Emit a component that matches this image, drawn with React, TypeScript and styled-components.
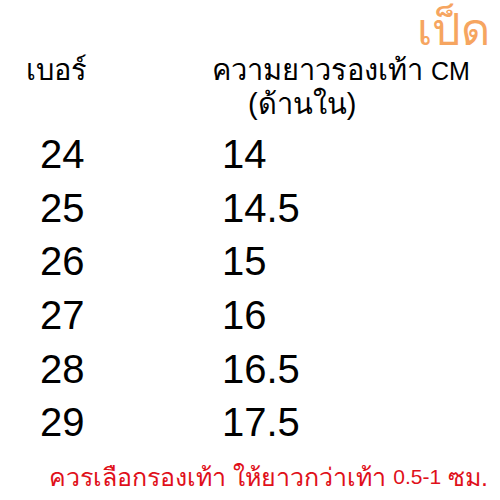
import React from "react";
import styled, { createGlobalStyle } from "styled-components";

const GlobalStyle = createGlobalStyle`
  html, body {
    margin: 0;
    padding: 0;
    background: #ffffff;
  }
  body {
    font-family: "Liberation Sans", "Noto Sans", sans-serif;
    color: #000000;
  }
`;

const Page = styled.div`
  width: 500px;
  height: 500px;
  display: flex;
  flex-direction: column;
  background: #ffffff;
  overflow: hidden;

  & > * {
    flex-shrink: 0;
  }
`;

const TitleRow = styled.div`
  height: 54px;
  display: flex;
  justify-content: flex-end;
  align-items: center;
  padding-right: 10px;
`;

const Title = styled.span`
  font-size: 45px;
  color: #f6a560;
  line-height: 1;
  margin-top: 4px;
`;

const HeaderRow = styled.div`
  height: 74px;
  display: grid;
  grid-template-columns: 186px 1fr;
  padding-left: 26px;
  font-size: 29px;
  line-height: 33px;
`;

const HeaderCell = styled.div`
  display: flex;
  flex-direction: column;
  align-items: flex-start;
`;

const Unit = styled.span`
  font-size: 25px;
`;

const SubLabel = styled.span`
  padding-left: 36px;
`;

const Table = styled.div`
  display: flex;
  flex-direction: column;
  padding-left: 40px;
`;

const Row = styled.div`
  display: grid;
  grid-template-columns: 182px 1fr;
  height: 53.6px;
  align-items: center;
  font-size: 40px;
`;

const Footer = styled.div`
  flex: 1 1 auto;
  display: flex;
  justify-content: flex-end;
  align-items: flex-end;
  padding: 0 12px 8px 0;
  color: #e0101a;
  font-size: 25px;
  line-height: 30px;
`;

const Digits = styled.span`
  font-size: 21px;
`;

const sizes: [string, string][] = [
  ["24", "14"],
  ["25", "14.5"],
  ["26", "15"],
  ["27", "16"],
  ["28", "16.5"],
  ["29", "17.5"],
];

export default function App() {
  return (
    <Page>
      <GlobalStyle />
      <TitleRow>
        <Title>เป็ด</Title>
      </TitleRow>
      <HeaderRow>
        <HeaderCell>เบอร์</HeaderCell>
        <HeaderCell>
          <span>
            ความยาวรองเท้า <Unit>CM</Unit>
          </span>
          <SubLabel>(ด้านใน)</SubLabel>
        </HeaderCell>
      </HeaderRow>
      <Table>
        {sizes.map(([size, length]) => (
          <Row key={size}>
            <span>{size}</span>
            <span>{length}</span>
          </Row>
        ))}
      </Table>
      <Footer>
        ควรเลือกรองเท้า ให้ยาวกว่าเท้า&nbsp;<Digits>0.5-1</Digits>&nbsp;ซม.
      </Footer>
    </Page>
  );
}
